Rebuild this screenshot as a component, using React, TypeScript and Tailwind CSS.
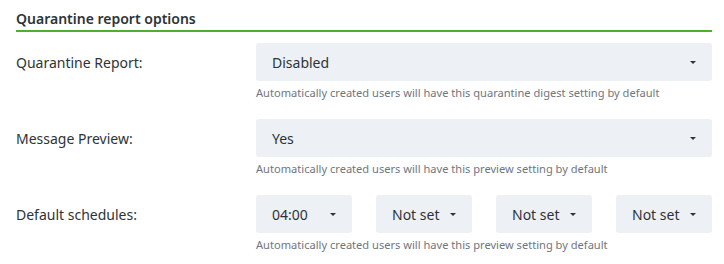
import React from "react";

function Caret() {
  return (
    <span className="inline-block w-0 h-0 border-l-[3.5px] border-r-[3.5px] border-t-[3.5px] border-l-transparent border-r-transparent border-t-[#2d3436]" />
  );
}

function Select({ value, className }: { value: string; className: string }) {
  return (
    <div
      className={`h-[38px] rounded-[3px] bg-[#edf0f5] flex items-center justify-between pl-4 pr-4 text-[14px] text-[#2d3436] ${className}`}
    >
      <span>{value}</span>
      <Caret />
    </div>
  );
}

function Hint({ children }: { children: React.ReactNode }) {
  return <div className="mt-[5px] text-[11.1px] leading-[14px] text-[#707680]">{children}</div>;
}

function Row({ label, children }: { label: string; children: React.ReactNode }) {
  return (
    <div className="flex">
      <div className="w-[240px] shrink-0 h-[38px] flex items-center text-[14px] text-[#2d3436]">{label}</div>
      <div className="flex-1 min-w-0">{children}</div>
    </div>
  );
}

export default function App() {
  return (
    <div
      className="w-[724px] h-[264px] bg-white pl-4 pr-3 pt-[8px]"
      style={{ fontFamily: "'Noto Sans', sans-serif" }}
    >
      <div className="h-[24px] border-b-[2px] border-[#4caf32] text-[14px] font-semibold text-[#2d3436] leading-[22px]">
        Quarantine report options
      </div>
      <div className="pt-[11px] flex flex-col gap-[19px]">
        <Row label="Quarantine Report:">
          <Select value="Disabled" className="w-full" />
          <Hint>Automatically created users will have this quarantine digest setting by default</Hint>
        </Row>
        <Row label="Message Preview:">
          <Select value="Yes" className="w-full" />
          <Hint>Automatically created users will have this preview setting by default</Hint>
        </Row>
        <Row label="Default schedules:">
          <div className="flex gap-6">
            <Select value="04:00" className="w-[96px] shrink-0" />
            <Select value="Not set" className="w-[96px] shrink-0" />
            <Select value="Not set" className="w-[96px] shrink-0" />
            <Select value="Not set" className="w-[96px] shrink-0" />
          </div>
          <Hint>Automatically created users will have this preview setting by default</Hint>
        </Row>
      </div>
    </div>
  );
}
